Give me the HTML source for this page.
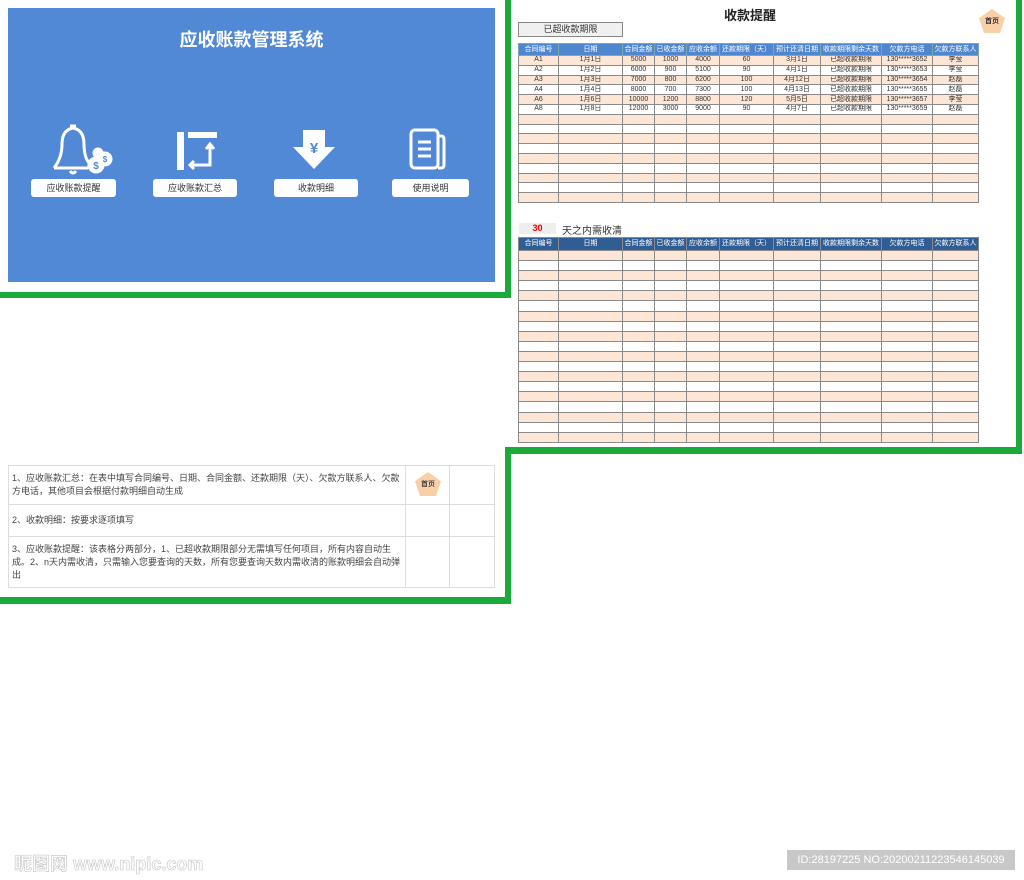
<!DOCTYPE html>
<html><head><meta charset="utf-8"><style>
*{margin:0;padding:0;box-sizing:border-box}
body{width:1024px;height:880px;background:#fff;position:relative;overflow:hidden;font-family:"Liberation Sans","Noto Sans CJK SC",sans-serif;color:#333}
.a{position:absolute}
.g{position:absolute;background:#1aaa3a}
.btn{position:absolute;background:#fff;border-radius:3px;font-size:9px;text-align:center;line-height:18px;height:18px;top:179px;color:#333}
table{border-collapse:collapse;position:absolute;table-layout:fixed}
td{border:1px solid #8a8a8a;font-size:7px;text-align:center;height:9.8px;line-height:8px;padding:0;overflow:hidden;white-space:nowrap;color:#333}
tr.h td{background:#4f86d0;color:#fff;height:12px;border-color:#7aa}
tr.h2 td{background:#2f5d94;color:#fff;height:13px}
#t2 td{height:10.1px}
#t2 tr.h2 td{height:13px}
tr.o td{background:#fde6d6}
.pent{position:absolute;width:26px;height:24px;background:#f9cfa8;clip-path:polygon(50% 0,100% 38%,81% 100%,19% 100%,0 38%);font-size:7px;font-weight:bold;text-align:center;line-height:26px}
.nt td{border:1px solid #ddd;font-size:9px;text-align:left;white-space:normal;line-height:13px;padding:2px 3px;vertical-align:middle;color:#444}
</style></head><body>
<!-- left top panel -->
<div class="a" style="left:8px;top:8px;width:487px;height:274px;background:#5189d6"></div>
<div class="a" style="left:8px;top:26px;width:487px;text-align:center;color:#fff;font-size:18px;font-weight:bold">应收账款管理系统</div>
<svg class="a" style="left:40px;top:120px" width="440" height="58" viewBox="0 0 440 58" fill="none" stroke="#fff" stroke-width="3">
<path d="M14 48 Q22 38 22 24 Q22 10 33 8 Q44 10 44 24 Q44 38 50 44 M14 48 H48"/><path d="M30 6 h6"/><path d="M30 51 q3 4 6 0" />
<circle cx="56" cy="45" r="7" fill="#fff"/><circle cx="65" cy="39" r="6" fill="#fff"/><circle cx="58" cy="33" r="4" fill="#fff"/>
<text x="56" y="49" font-size="10" fill="#5189d6" stroke="none" text-anchor="middle" font-weight="bold">$</text>
<text x="65" y="42" font-size="8" fill="#5189d6" stroke="none" text-anchor="middle" font-weight="bold">$</text>
<rect x="137" y="12" width="7" height="38" fill="#fff" stroke="none"/><rect x="148" y="12" width="29" height="6" fill="#fff" stroke="none"/>
<path d="M170 25 v20 h-20 M166 29 l4-5 4 5 M154 41 l-4 4 4 4"/>
<path d="M263 10 h22 v17 h10 l-21 22 -21-22 h10z" fill="#fff" stroke="none"/>
<text x="274" y="33" font-size="15" fill="#5189d6" stroke="none" text-anchor="middle" font-weight="bold">¥</text>
<rect x="371" y="10" width="27" height="38" rx="4"/><path d="M398 16 h3 q3 0 3 3 v26 q0 3-3 3 h-3 M378 22 h13 M378 29 h13 M378 36 h13"/>
</svg>
<div class="btn" style="left:31px;width:85px">应收账款提醒</div>
<div class="btn" style="left:153px;width:84px">应收账款汇总</div>
<div class="btn" style="left:274px;width:84px">收款明细</div>
<div class="btn" style="left:392px;width:77px">使用说明</div>
<div class="g" style="left:0;top:292px;width:511px;height:6px"></div>
<div class="g" style="left:505px;top:0;width:6px;height:298px"></div>
<!-- right panel -->
<div class="g" style="left:1016px;top:0;width:6px;height:454px"></div>
<div class="g" style="left:505px;top:447px;width:517px;height:7px"></div>
<div class="a" style="left:520px;top:5px;width:460px;text-align:center;font-size:13px;font-weight:bold;color:#222">收款提醒</div>
<div class="pent" style="left:979px;top:9px">首页</div>
<div class="a" style="left:518px;top:22px;width:105px;height:15px;border:1px solid #888;background:#f0f0f0;font-size:9px;text-align:center;line-height:13px">已超收款期限</div>
<table style="left:518px;top:43px;width:460px">
<colgroup><col style="width:40px"><col style="width:64px"><col style="width:32px"><col style="width:32px"><col style="width:33px"><col style="width:54px"><col style="width:47px"><col style="width:61px"><col style="width:51px"><col style="width:46px"></colgroup>
<tr class="h"><td>合同编号</td><td>日期</td><td>合同金额</td><td>已收金额</td><td>应收余额</td><td>还款期限（天）</td><td>预计还清日期</td><td>收款期限剩余天数</td><td>欠款方电话</td><td>欠款方联系人</td></tr>
<tr class="o"><td>A1</td><td>1月1日</td><td>5000</td><td>1000</td><td>4000</td><td>60</td><td>3月1日</td><td>已超收款期限</td><td>130*****3652</td><td>李莹</td></tr>
<tr><td>A2</td><td>1月2日</td><td>6000</td><td>900</td><td>5100</td><td>90</td><td>4月1日</td><td>已超收款期限</td><td>130*****3653</td><td>李莹</td></tr>
<tr class="o"><td>A3</td><td>1月3日</td><td>7000</td><td>800</td><td>6200</td><td>100</td><td>4月12日</td><td>已超收款期限</td><td>130*****3654</td><td>赵磊</td></tr>
<tr><td>A4</td><td>1月4日</td><td>8000</td><td>700</td><td>7300</td><td>100</td><td>4月13日</td><td>已超收款期限</td><td>130*****3655</td><td>赵磊</td></tr>
<tr class="o"><td>A6</td><td>1月6日</td><td>10000</td><td>1200</td><td>8800</td><td>120</td><td>5月5日</td><td>已超收款期限</td><td>130*****3657</td><td>李莹</td></tr>
<tr><td>A8</td><td>1月8日</td><td>12000</td><td>3000</td><td>9000</td><td>90</td><td>4月7日</td><td>已超收款期限</td><td>130*****3659</td><td>赵磊</td></tr>
<tr class="o"><td></td><td></td><td></td><td></td><td></td><td></td><td></td><td></td><td></td><td></td></tr>
<tr><td></td><td></td><td></td><td></td><td></td><td></td><td></td><td></td><td></td><td></td></tr>
<tr class="o"><td></td><td></td><td></td><td></td><td></td><td></td><td></td><td></td><td></td><td></td></tr>
<tr><td></td><td></td><td></td><td></td><td></td><td></td><td></td><td></td><td></td><td></td></tr>
<tr class="o"><td></td><td></td><td></td><td></td><td></td><td></td><td></td><td></td><td></td><td></td></tr>
<tr><td></td><td></td><td></td><td></td><td></td><td></td><td></td><td></td><td></td><td></td></tr>
<tr class="o"><td></td><td></td><td></td><td></td><td></td><td></td><td></td><td></td><td></td><td></td></tr>
<tr><td></td><td></td><td></td><td></td><td></td><td></td><td></td><td></td><td></td><td></td></tr>
<tr class="o"><td></td><td></td><td></td><td></td><td></td><td></td><td></td><td></td><td></td><td></td></tr>
</table>
<div class="a" style="left:519px;top:223px;width:37px;height:11px;background:#eee;color:#e00;font-size:9px;font-weight:bold;text-align:center;line-height:11px">30</div>
<div class="a" style="left:562px;top:222px;font-size:10px;color:#333">天之内需收清</div>
<table id="t2" style="left:518px;top:237px;width:460px">
<colgroup><col style="width:40px"><col style="width:64px"><col style="width:32px"><col style="width:32px"><col style="width:33px"><col style="width:54px"><col style="width:47px"><col style="width:61px"><col style="width:51px"><col style="width:46px"></colgroup>
<tr class="h2"><td>合同编号</td><td>日期</td><td>合同金额</td><td>已收金额</td><td>应收余额</td><td>还款期限（天）</td><td>预计还清日期</td><td>收款期限剩余天数</td><td>欠款方电话</td><td>欠款方联系人</td></tr>
</table>
<script>
var t=document.getElementById('t2');for(var i=0;i<19;i++){var r=t.insertRow();if(i%2==0)r.className='o';for(var j=0;j<10;j++)r.insertCell();}
</script>
<!-- bottom-left panel -->
<div class="g" style="left:505px;top:447px;width:6px;height:157px"></div>
<div class="g" style="left:0;top:597px;width:511px;height:7px"></div>
<table class="nt" style="left:8px;top:465px;width:486px">
<colgroup><col style="width:397px"><col style="width:44px"><col style="width:45px"></colgroup>
<tr><td style="height:39px">1、应收账款汇总：在表中填写合同编号、日期、合同金额、还款期限（天）、欠款方联系人、欠款方电话，其他项目会根据付款明细自动生成</td><td style="position:relative"><div class="pent" style="left:9px;top:6px">首页</div></td><td></td></tr>
<tr><td style="height:32px">2、收款明细：按要求逐项填写</td><td></td><td></td></tr>
<tr><td style="height:51px">3、应收账款提醒：该表格分两部分，1、已超收款期限部分无需填写任何项目，所有内容自动生成。2、n天内需收清，只需输入您要查询的天数，所有您要查询天数内需收清的账款明细会自动弹出</td><td></td><td></td></tr>
</table>
<!-- watermark -->
<div class="a" style="left:14px;top:850px;font-size:18px;color:#fff;-webkit-text-stroke:0.6px #c4c4c4;font-weight:bold">昵图网 www.nipic.com</div>
<div class="a" style="left:787px;top:850px;width:228px;height:20px;background:#c8c8c8;color:#fff;font-size:11px;text-align:center;line-height:20px">ID:28197225 NO:20200211223546145039</div>
</body></html>
